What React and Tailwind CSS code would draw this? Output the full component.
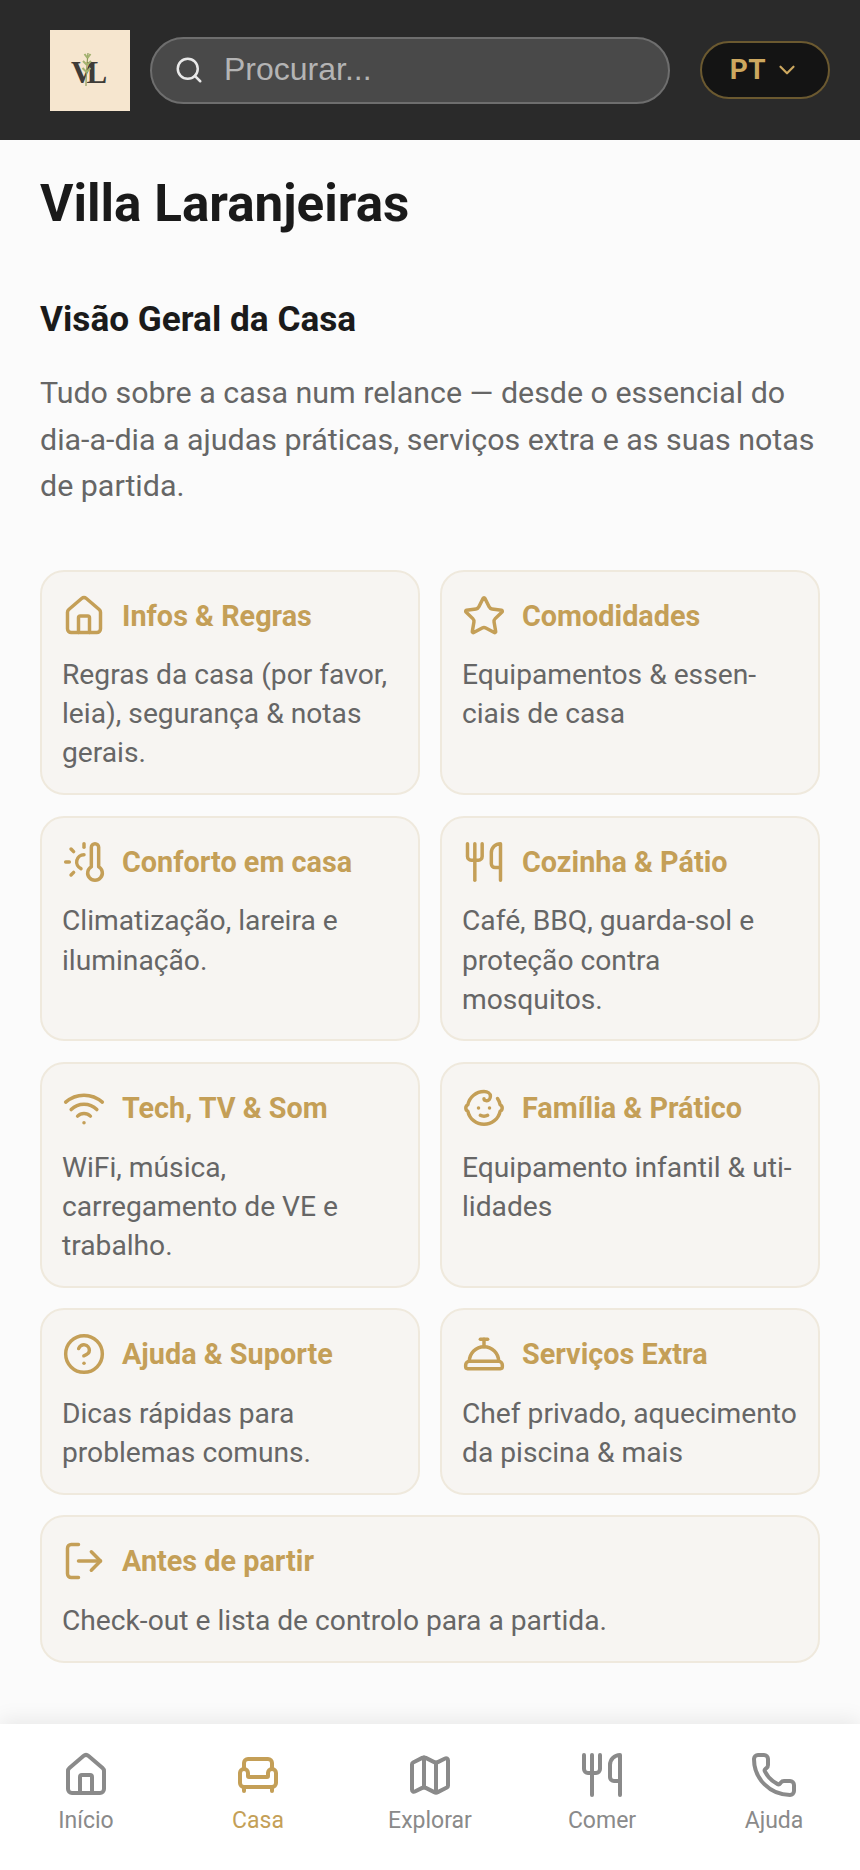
import {
  Armchair,
  Baby,
  ChevronDown,
  CircleHelp,
  ConciergeBell,
  House,
  LogOut,
  Map,
  Phone,
  Search,
  Star,
  ThermometerSun,
  Utensils,
  Wifi,
} from "lucide-react";

const sections = [
  { title: "Infos & Regras", text: "Regras da casa (por favor, leia), segurança & notas gerais.", icon: House },
  { title: "Comodidades", text: "Equipamentos & essen-\nciais de casa", icon: Star },
  { title: "Conforto em casa", text: "Climatização, lareira e iluminação.", icon: ThermometerSun },
  { title: "Cozinha & Pátio", text: "Café, BBQ, guarda-sol e proteção contra mosquitos.", icon: Utensils },
  { title: "Tech, TV & Som", text: "WiFi, música, carregamento de VE e trabalho.", icon: Wifi },
  { title: "Família & Prático", text: "Equipamento infantil & uti-\nlidades", icon: Baby },
  { title: "Ajuda & Suporte", text: "Dicas rápidas para problemas comuns.", icon: CircleHelp },
  { title: "Serviços Extra", text: "Chef privado, aquecimento da piscina & mais", icon: ConciergeBell },
  { title: "Antes de partir", text: "Check-out e lista de controlo para a partida.", icon: LogOut, wide: true },
];

const navItems = [
  { label: "Início", icon: House },
  { label: "Casa", icon: Armchair, active: true },
  { label: "Explorar", icon: Map },
  { label: "Comer", icon: Utensils },
  { label: "Ajuda", icon: Phone },
];

function Logo() {
  return (
    <div className="flex h-[81px] w-[80px] shrink-0 items-center justify-center bg-[#f6e6cf]">
      <svg width="60" height="48" viewBox="0 0 60 48">
        <text x="11" y="37" fontSize="31" fontWeight="700" letterSpacing="-7" fill="#3f3c38" className="font-['Liberation_Serif',serif]">VL</text>
        <path d="M26 40C26 30 27 18 28 7" stroke="#8c9c5c" strokeWidth="1.2" fill="none" />
        <path d="M27.5 12l-3-4M27.5 12l3-4M27 19l-4-4M27 19l4-4M26.5 26l-4-4M26.5 26l4-4" stroke="#a3b26f" strokeWidth="2" fill="none" />
      </svg>
    </div>
  );
}

function Header() {
  return (
    <header className="flex h-[140px] items-center bg-[#2a2a2a] pl-[50px] pr-[30px]">
      <Logo />
      <div className="ml-[20px] flex h-[67px] w-[520px] items-center rounded-full border-2 border-[#6e6e6e] bg-[#494949] pl-[22px]">
        <Search className="h-[30px] w-[30px] text-[#e8e8e8]" strokeWidth={2} />
        <span className="ml-[20px] pb-[2px] font-['Liberation_Sans',sans-serif] text-[32px] leading-none text-[#b4b4b4]">Procurar...</span>
      </div>
      <button className="ml-[30px] flex h-[58px] w-[130px] items-center justify-center gap-[8px] rounded-full border-2 border-[#6b5930] bg-[#141414] text-[28px] font-bold tracking-[0.5px] text-[#cda85f]">
        PT
        <ChevronDown className="h-[26px] w-[26px]" strokeWidth={2} />
      </button>
    </header>
  );
}

function SectionCard({ section }) {
  const Icon = section.icon;
  return (
    <div className={`rounded-[24px] border-2 border-[#efe9dd] bg-[#f7f5f2] px-[20px] pb-[20.5px] pt-[20px] ${section.wide ? "col-span-2" : ""}`}>
      <div className="flex h-[48px] items-center gap-[16px]">
        <Icon className="h-[44px] w-[44px] shrink-0 text-[#c49f57]" strokeWidth={1.9} />
        <h3 className="text-[28.8px] font-bold leading-[40px] text-[#c49f57]">{section.title}</h3>
      </div>
      <p className="mt-[15.5px] whitespace-pre-line text-[28.2px] leading-[39.2px] text-[#666666]">{section.text}</p>
    </div>
  );
}

function BottomNav() {
  return (
    <nav className="grid h-[146px] grid-cols-5 bg-white pt-[27px] shadow-[0_-4px_20px_rgba(0,0,0,0.08)]">
      {navItems.map((item) => {
        const Icon = item.icon;
        return (
          <div key={item.label} className={`flex flex-col items-center ${item.active ? "text-[#c49f57]" : "text-[#8a8a8a]"}`}>
            <Icon className="h-[48px] w-[48px]" strokeWidth={2} />
            <span className="mt-[7px] text-[23px] leading-[30px]">{item.label}</span>
          </div>
        );
      })}
    </nav>
  );
}

export default function App() {
  return (
    <div className="flex h-[1870px] w-[860px] flex-col overflow-hidden bg-[#fbfbfb] font-['Roboto',sans-serif]">
      <Header />
      <main className="flex-1 px-[40px] pt-[34px]">
        <h1 className="text-[51.2px] font-bold leading-[60px] text-[#1a1a1a]">Villa Laranjeiras</h1>
        <h2 className="mt-[65px] text-[35.2px] font-bold leading-[40px] text-[#1a1a1a]">Visão Geral da Casa</h2>
        <p className="mt-[31px] text-[30.4px] leading-[46.5px] text-[#666666]">
          Tudo sobre a casa num relance — desde o essencial do dia-a-dia a ajudas práticas, serviços extra e as suas notas de partida.
        </p>
        <div className="mt-[60px] grid grid-cols-2 gap-x-[20px] gap-y-[20.7px]">
          {sections.map((section) => (
            <SectionCard key={section.title} section={section} />
          ))}
        </div>
      </main>
      <BottomNav />
    </div>
  );
}
